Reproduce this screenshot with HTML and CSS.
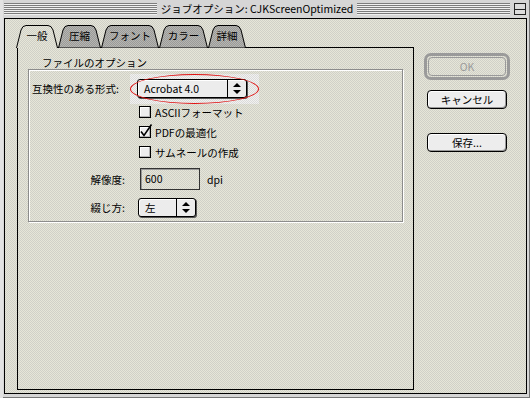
FILE: index.html
```html
<!DOCTYPE html>
<html lang="ja">
<head>
    <meta charset="UTF-8">
    <title>ジョブオプション: CJKScreenOptimized</title>
    <link rel="stylesheet" href="styles.css">
</head>
<body>
    <div class="window">
        <div class="titlebar">
            <span class="stripes"></span>
            <span class="title">ジョブオプション: CJKScreenOptimized</span>
            <span class="stripes"></span>
            <span class="zoombox"></span>
        </div>

        <div class="frame">
            <div class="main">
                <div class="tabs">
                    <div class="tab tab-general active">
                        <svg width="42" height="23" viewBox="0 0 42 23">
                            <defs>
                                <pattern id="dither-light" width="2" height="2" patternUnits="userSpaceOnUse">
                                    <rect width="2" height="2" fill="#e6e6d8"/>
                                    <rect width="1" height="1" fill="#d0d0c8"/>
                                    <rect x="1" y="1" width="1" height="1" fill="#d0d0c8"/>
                                </pattern>
                                <pattern id="dither-gray" width="2" height="2" patternUnits="userSpaceOnUse">
                                    <rect width="2" height="2" fill="#b6b6b2"/>
                                    <rect width="1" height="1" fill="#9a9a98"/>
                                    <rect x="1" y="1" width="1" height="1" fill="#9a9a98"/>
                                </pattern>
                            </defs>
                            <path d="M0.5 23 L5 5 Q6.5 0.5 10 0.5 H32 Q35.5 0.5 37 5 L41.5 23 Z" fill="url(#dither-light)" stroke="none"/>
                            <path d="M0.5 23 L5 5 Q6.5 0.5 10 0.5 H32 Q35.5 0.5 37 5 L41.5 23" fill="none" stroke="#000"/>
                        </svg>
                        <span>一般</span>
                    </div>
                    <div class="tab tab-compress">
                        <svg width="43" height="23" viewBox="0 0 43 23">
                            <path d="M0.5 23 L5 5 Q6.5 0.5 10 0.5 H33 Q36.5 0.5 38 5 L42.5 23 Z" fill="url(#dither-gray)" stroke="#000"/>
                        </svg>
                        <span>圧縮</span>
                    </div>
                    <div class="tab tab-font">
                        <svg width="58" height="23" viewBox="0 0 58 23">
                            <path d="M0.5 23 L5 5 Q6.5 0.5 10 0.5 H48 Q51.5 0.5 53 5 L57.5 23 Z" fill="url(#dither-gray)" stroke="#000"/>
                        </svg>
                        <span>フォント</span>
                    </div>
                    <div class="tab tab-color">
                        <svg width="49" height="23" viewBox="0 0 49 23">
                            <path d="M0.5 23 L5 5 Q6.5 0.5 10 0.5 H39 Q42.5 0.5 44 5 L48.5 23 Z" fill="url(#dither-gray)" stroke="#000"/>
                        </svg>
                        <span>カラー</span>
                    </div>
                    <div class="tab tab-detail">
                        <svg width="38" height="23" viewBox="0 0 38 23">
                            <path d="M0.5 23 L5 5 Q6.5 0.5 10 0.5 H28 Q31.5 0.5 33 5 L37.5 23 Z" fill="url(#dither-gray)" stroke="#000"/>
                        </svg>
                        <span>詳細</span>
                    </div>
                </div>

                <div class="panel">
                    <div class="group-label">ファイルのオプション</div>
                    <div class="group">
                        <div class="row row-format">
                            <span class="label">互換性のある形式:</span>
                            <span class="highlight">
                                <span class="popup popup-wide">
                                    <span class="popup-text">Acrobat 4.0</span>
                                    <span class="popup-arrows">
                                        <svg width="8" height="11" viewBox="0 0 8 11"><path d="M4 0 L8 4 H0 Z M0 7 H8 L4 11 Z" fill="#000"/></svg>
                                    </span>
                                </span>
                            </span>
                        </div>

                        <div class="check-row first">
                            <span class="checkbox"></span>
                            <span>ASCIIフォーマット</span>
                        </div>
                        <div class="check-row">
                            <span class="checkbox">
                                <svg width="10" height="10" viewBox="0 0 10 10"><path d="M1 4.5 L4 8.5 L11.5 -2.5" fill="none" stroke="#000" stroke-width="1.6"/></svg>
                            </span>
                            <span>PDFの最適化</span>
                        </div>
                        <div class="check-row">
                            <span class="checkbox"></span>
                            <span>サムネールの作成</span>
                        </div>

                        <div class="row row-resolution">
                            <span class="label label-right">解像度:</span>
                            <span class="textbox">600</span>
                            <span class="unit">dpi</span>
                        </div>

                        <div class="row row-binding">
                            <span class="label label-right">綴じ方:</span>
                            <span class="popup popup-small">
                                <span class="popup-text">左</span>
                                <span class="popup-arrows">
                                    <svg width="8" height="11" viewBox="0 0 8 11"><path d="M4 0 L8 4 H0 Z M0 7 H8 L4 11 Z" fill="#000"/></svg>
                                </span>
                            </span>
                        </div>
                    </div>
                </div>
            </div>

            <div class="side">
                <div class="default-ring">
                    <button class="btn disabled">OK</button>
                </div>
                <button class="btn btn-cancel">キャンセル</button>
                <button class="btn btn-save">保存...</button>
            </div>
        </div>
    </div>
</body>
</html>
```

FILE: styles.css
```css
* {
    box-sizing: border-box;
}
body {
    margin: 0;
    font-family: "Noto Sans CJK JP", "Noto Sans", sans-serif;
    font-size: 10.5px;
    color: #000;
    background: #d4d4d4;
}

.window {
    width: 530px;
    height: 398px;
    display: flex;
    flex-direction: column;
    padding: 0 3px 4px 4px;
    background: #d6d6d6;
    box-shadow: inset 3px 0 0 #e2e2e2, inset -1px -1px 0 #777;
}

/* title bar */
.titlebar {
    height: 18px;
    display: flex;
    align-items: center;
    padding-right: 1px;
}
.stripes {
    flex: 1;
    height: 12px;
    background: repeating-linear-gradient(#7c7c7c 0 1px, #f0f0f0 1px 2px);
}
.title {
    padding: 0 4px;
    line-height: 18px;
    white-space: nowrap;
}
.zoombox {
    width: 12px;
    height: 12px;
    margin-left: 4px;
    border: 1px solid #222;
    background: linear-gradient(#222, #222) center / 100% 1px no-repeat, #dcdcdc;
}

/* window body */
.frame {
    flex: 1;
    display: flex;
    padding: 6px 0 3px 12px;
    border: 1px solid #000;
    background: repeating-conic-gradient(#e6e6d8 0 25%, #d0d0c8 0 50%) 0 0 / 2px 2px;
}
.main {
    width: 397px;
    display: flex;
    flex-direction: column;
}

/* tabs */
.tabs {
    display: flex;
    height: 23px;
    margin-left: -1px;
    margin-bottom: -1px;
    position: relative;
    z-index: 1;
}
.tab {
    display: grid;
    height: 23px;
}
.tab > * {
    grid-area: 1 / 1;
}
.tab span {
    place-self: center;
    padding-bottom: 2px;
}
.tab-general { width: 42px; }
.tab-compress { width: 43px; }
.tab-font { width: 58px; }
.tab-color { width: 49px; }
.tab-detail { width: 38px; }

.panel {
    flex: 1;
    border: 1px solid #000;
    padding: 9px 10px 0 10px;
}

/* group box */
.group-label {
    margin-left: 14px;
    line-height: 12px;
    height: 12px;
}
.group {
    border: 1px solid #8c8c8c;
    box-shadow: inset 1px 1px 0 #fff, 1px 1px 0 #fff;
    padding: 9px 0 4px 3px;
}
.row {
    display: flex;
    align-items: center;
}
.label {
    width: 105px;
    white-space: nowrap;
}
.label-right {
    width: 93px;
    text-align: right;
}

/* red annotation around the format popup */
.highlight {
    position: relative;
    display: inline-flex;
    padding: 5px 12px 6px 7px;
    margin: -5px -12px -6px -7px;
    background: repeating-conic-gradient(#f2f2f0 0 25%, #dadada 0 50%) 0 0 / 2px 2px;
}
.highlight::after {
    content: "";
    position: absolute;
    inset: 0;
    border: 1px solid #e01010;
    border-radius: 50%;
}

.popup {
    display: flex;
    height: 19px;
    border: 1px solid #000;
    border-radius: 3px;
    background: #ececec;
    box-shadow: 1px 1px 0 #555, inset 1px 1px 0 #fff;
}
.popup-wide { width: 110px; }
.popup-small {
    width: 58px;
    margin-left: 13px;
}
.popup-text {
    flex: 1;
    padding-left: 6px;
    line-height: 17px;
}
.popup-arrows {
    width: 19px;
    display: flex;
    align-items: center;
    justify-content: center;
    border-left: 1px solid #000;
}

/* checkboxes */
.check-row {
    display: flex;
    align-items: center;
    height: 20px;
    margin-left: 107px;
}
.check-row.first {
    margin-top: 4px;
}
.checkbox {
    width: 12px;
    height: 12px;
    margin-right: 4px;
    border: 1px solid #000;
    background: #ededed;
    box-shadow: inset -1px -1px 0 #b4b4b4, inset 1px 1px 0 #fff;
    display: grid;
}
.checkbox svg {
    overflow: visible;
}

/* resolution field */
.row-resolution {
    margin-top: 6px;
}
.textbox {
    width: 60px;
    height: 22px;
    margin-left: 15px;
    padding-left: 4px;
    line-height: 20px;
    border: 1px solid #333;
    box-shadow: inset 1px 1px 0 #999;
}
.unit {
    margin-left: 7px;
}
.row-binding {
    margin-top: 8px;
}

/* side buttons */
.side {
    width: 86px;
    margin-left: 10px;
    padding-top: 28px;
    display: flex;
    flex-direction: column;
    align-items: center;
}
.default-ring {
    width: 86px;
    height: 27px;
    padding: 1px;
    border: 3px solid #9a9a9a;
    border-radius: 7px;
}
.btn {
    display: block;
    width: 80px;
    height: 19px;
    padding: 0;
    font-family: inherit;
    font-size: 10.5px;
    line-height: 16px;
    color: #000;
    border: 1px solid #000;
    border-radius: 4px;
    background: #ededed;
    box-shadow: inset -1px -1px 0 #9a9a9a, inset 1px 1px 0 #fff;
}
.default-ring .btn {
    width: 100%;
    height: 100%;
}
.btn.disabled {
    color: #9a9a9a;
    border-color: #9a9a9a;
    background: transparent;
    box-shadow: none;
}
.btn-cancel {
    margin-top: 10px;
}
.btn-save {
    margin-top: 24px;
}
```
